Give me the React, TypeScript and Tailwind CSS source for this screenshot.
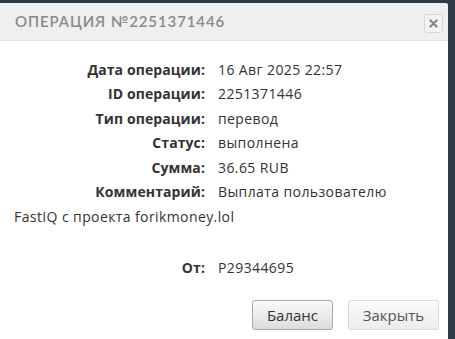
export default function App() {
  const rows: [string, string][] = [
    ["Дата операции:", "16 Авг 2025 22:57"],
    ["ID операции:", "2251371446"],
    ["Тип операции:", "перевод"],
    ["Статус:", "выполнена"],
    ["Сумма:", "36.65 RUB"],
    ["Комментарий:", "Выплата пользователю"],
  ];
  return (
    <div className="w-[455px] h-[339px] bg-[#2e3b45] pt-[3px] overflow-hidden" style={{ fontFamily: "'Open Sans', sans-serif" }}>
      <div className="w-[448px] h-[336px] bg-white rounded-tr-[3px] flex flex-col">
        <div className="h-[38px] bg-[#efefef] border-b border-[#e2e2e2] flex items-center justify-between pl-[15px] pr-[5px] rounded-tr-[3px]">
          <div className="text-[15px] tracking-[0.9px] font-semibold text-[#8a8a8a]" style={{ fontFamily: "Lato, sans-serif" }}>ОПЕРАЦИЯ №2251371446</div>
          <div className="w-[19px] h-[19px] mt-[3px] border border-[#d8d8d8] rounded-[3px] bg-[#f3f3f3] flex items-center justify-center">
            <svg width="9" height="9" viewBox="0 0 9 9">
              <path d="M1.5 1.5 L7.5 7.5 M7.5 1.5 L1.5 7.5" stroke="#8a8a8a" strokeWidth="2.4" strokeLinecap="round" />
            </svg>
          </div>
        </div>
        <div className="pt-[16px] text-[14px] text-[#333] tracking-[0.4px]" style={{ fontFamily: "'Open Sans', sans-serif" }}>
          {rows.map(([k, v]) => (
            <div key={k} className="flex h-[24.5px] items-center">
              <div className="w-[205px] text-right font-bold text-[#333] tracking-[0.1px]">{k}</div>
              <div className="pl-[13px]">{v}</div>
            </div>
          ))}
          <div className="h-[24.5px] flex items-center pl-[14px]">FastIQ с проекта forikmoney.lol</div>
          <div className="h-[27px]" />
          <div className="flex h-[24.5px] items-center">
            <div className="w-[205px] text-right font-bold tracking-[0.1px]">От:</div>
            <div className="pl-[13px]">P29344695</div>
          </div>
        </div>
        <div className="flex justify-end gap-[15px] pr-[9px] mt-[20px]">
          <button className="w-[81px] h-[30px] rounded-[3px] border border-[#a9a9a9] bg-gradient-to-b from-[#fafafa] to-[#dcdcdc] text-[15px] text-[#333]">Баланс</button>
          <button className="w-[91px] h-[30px] rounded-[3px] border border-[#dcdcdc] bg-gradient-to-b from-[#fbfbfb] to-[#ececec] text-[15px] text-[#555]">Закрыть</button>
        </div>
      </div>
    </div>
  );
}
